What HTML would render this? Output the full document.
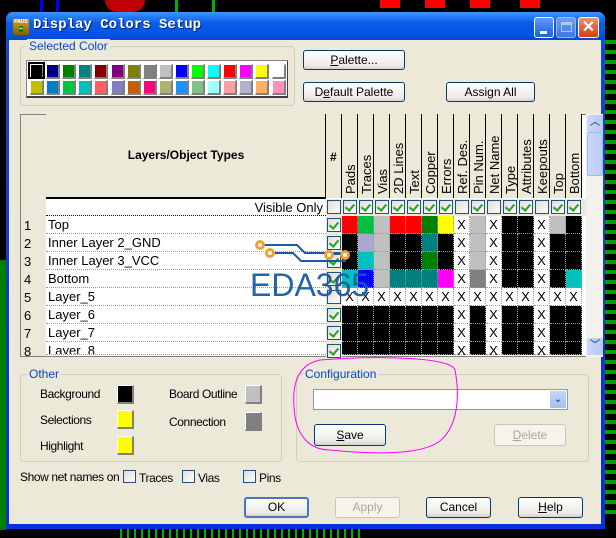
<!DOCTYPE html>
<html><head><meta charset="utf-8"><style>
*{box-sizing:border-box;margin:0;padding:0}
body{width:616px;height:538px;background:#000;position:relative;overflow:hidden;font-family:"Liberation Sans",sans-serif;font-size:12px;color:#000}
.a{position:absolute}
.btn{position:absolute;border:1px solid #003c74;border-radius:3px;background:linear-gradient(#fff,#ecebe6 80%,#d6d0c5);text-align:center;font-size:12px;line-height:18px}
.dis{border-color:#c9c7ba;color:#aca899;background:#f5f4ea}
.grp{position:absolute;border:1px solid #d0d0bf;border-radius:4px}
.gl{position:absolute;background:#ece9d8;color:#0046d5;padding:0 2px;top:-8px;left:6px;font-size:12px}
.cb{position:absolute;width:13px;height:13px;border:1px solid #1c5180;background:linear-gradient(135deg,#dcdcd7,#fff)}
.ck{position:absolute;width:14px;height:14px;border:1px solid #1c5180;background:linear-gradient(135deg,#dcdcd7,#fff)}
.ck.on::after{content:"";position:absolute;left:3px;top:1px;width:4px;height:7px;border:solid #21a121;border-width:0 2px 2px 0;transform:rotate(40deg)}
.sw{position:absolute;width:14px;height:15px;border-right:2px solid #808080;border-bottom:2px solid #808080;border-top:1px solid #fff;border-left:1px solid #fff}
.hd{position:absolute;top:114px;height:84px;border-right:1px solid #000;background:#ece9d8}
.hd span{position:absolute;left:0;bottom:4px;transform-origin:0 0;transform:rotate(-90deg) translate(0,0);white-space:nowrap;font-size:13px;width:80px}
.c{position:absolute;width:16px;height:18px;border-right:1px dotted #999;border-bottom:1px dotted #999;text-align:center;line-height:17px;font-size:13px}
.n{letter-spacing:-0.4px}
</style></head><body>
<div class="a" style="left:40px;top:0;width:3px;height:14px;background:#0000ff"></div>
<div class="a" style="left:56px;top:0;width:3px;height:14px;background:#0000ff"></div>
<div class="a" style="left:105px;top:0;width:40px;height:12px;background:#c00000;border-radius:0 0 20px 20px"></div>
<div class="a" style="left:175px;top:0;width:3px;height:14px;background:#00b000"></div>
<div class="a" style="left:212px;top:0;width:3px;height:14px;background:#00b000"></div>
<div class="a" style="left:380px;top:0;width:20px;height:8px;background:#ff0000"></div>
<div class="a" style="left:425px;top:0;width:20px;height:8px;background:#ff0000"></div>
<div class="a" style="left:470px;top:0;width:20px;height:8px;background:#ff0000"></div>
<div class="a" style="left:520px;top:0;width:20px;height:8px;background:#ff0000"></div>
<div class="a" style="left:604px;top:40px;width:12px;height:480px;background:repeating-linear-gradient(#00a000 0 4px,#000 4px 10px)"></div>
<div class="a" style="left:0;top:260px;width:6px;height:270px;background:#008000"></div>
<div class="a" style="left:120px;top:528px;width:240px;height:10px;background:repeating-linear-gradient(90deg,#00b000 0 2px,#000 2px 7px)"></div>
<div class="a" style="left:6px;top:12px;width:599px;height:517px;border-radius:7px 7px 0 0;background:linear-gradient(#0a5ee8,#0053e0 30px,#1545d0 40px,#0831d9)"></div>
<div class="a" style="left:6px;top:12px;width:599px;height:28px;border-radius:7px 7px 0 0;background:linear-gradient(#3d95ff,#0a5ce6 40%,#0055e5 80%,#0a46c8)"></div>
<div class="a" style="left:13px;top:19px;width:16px;height:16px;background:linear-gradient(#d8a020,#806000);font-size:5px;color:#fff;font-weight:bold;text-align:center;line-height:7px">PADS<br><span style="background:#080">▪▪</span></div>
<div class="a" style="left:33px;top:17px;color:#fff;font-family:'Liberation Mono',monospace;font-weight:bold;font-size:14px;text-shadow:1px 1px #0a1e80">Display Colors Setup</div>
<div class="a" style="left:534px;top:17px;width:20px;height:21px;border:1px solid #fff;border-radius:3px;background:linear-gradient(#5a9cff,#1e5ee6)"><div class="a" style="left:5px;top:13px;width:7px;height:3px;background:#fff"></div></div>
<div class="a" style="left:556px;top:17px;width:20px;height:21px;border:1px solid #ccd;border-radius:3px;background:linear-gradient(#7ab0ff,#5080e0);opacity:.8"><div class="a" style="left:4px;top:4px;width:11px;height:10px;border:1px solid #dde;border-top-width:3px"></div></div>
<div class="a" style="left:578px;top:17px;width:21px;height:21px;border:1px solid #fff;border-radius:3px;background:linear-gradient(#f09070,#d04010);color:#fff;font-weight:bold;font-size:16px;text-align:center;line-height:19px">✕</div>
<div class="a" style="left:9px;top:40px;width:592px;height:484px;background:#ece9d8"></div>

<div class="grp" style="left:20px;top:46px;width:275px;height:60px"><div class="gl">Selected Color</div></div>
<div class="a" style="left:26px;top:60px;width:262px;height:38px;background:#fff;border:1px solid #808080;border-right-color:#404040;border-bottom:2px solid #404040"></div>
<div id="pal"></div>
<div class="btn" style="left:303px;top:50px;width:102px;height:20px"><u>P</u>alette...</div>
<div class="btn" style="left:303px;top:82px;width:102px;height:20px">D<u>e</u>fault Palette</div>
<div class="btn" style="left:446px;top:82px;width:89px;height:20px">Assign All</div>

<div class="a" style="left:20px;top:114px;width:583px;height:243px;background:#fff;border:1px solid #808080"></div>
<div class="a" style="left:21px;top:115px;width:25px;height:241px;background:#ece9d8"></div>
<div class="hd" style="left:46px;width:280px;border-bottom:2px solid #000;height:85px"><div class="a" style="left:0;width:280px;top:34px;text-align:center;font-weight:bold;font-size:12px">Layers/Object Types</div></div>
<div class="hd" style="left:326px;width:16px"><div class="a" style="left:4px;top:36px;font-weight:bold">#</div></div>
<div id="hdrs"></div>
<div class="a" style="left:46px;top:199px;width:280px;height:17px;text-align:right;padding-right:3px;font-size:13px;line-height:17px;border-bottom:1px dotted #00c">Visible Only</div>
<div id="rows"></div>
<div class="a" style="left:586px;top:114px;width:17px;height:243px;background:#f3f1ec"></div>
<div class="a" style="left:587px;top:115px;width:16px;height:17px;border-radius:2px;background:linear-gradient(90deg,#c8d8ff,#b4c8f4);color:#4d6185;font-size:10px;text-align:center;line-height:16px;font-weight:bold">︿</div>
<div class="a" style="left:587px;top:132px;width:16px;height:44px;border-radius:2px;background:linear-gradient(90deg,#c8d8ff,#b8ccf8);border:1px solid #a0b8e8"></div>
<div class="a" style="left:587px;top:338px;width:16px;height:17px;border-radius:2px;background:linear-gradient(90deg,#c8d8ff,#b4c8f4);color:#4d6185;font-size:10px;text-align:center;line-height:16px;font-weight:bold">﹀</div>

<svg class="a" style="left:240px;top:236px" width="150" height="70">
<g fill="none" stroke="#1a5aa8" stroke-width="2"><path d="M24 9H57L65 17H106"/><path d="M34 17H53L61 25H106"/></g>
<g fill="#fff" stroke="#f0a030" stroke-width="3"><circle cx="20" cy="9" r="3.5"/><circle cx="30" cy="17" r="3.5"/><circle cx="89" cy="19" r="3.5"/><circle cx="105" cy="19" r="3.5"/></g>
<text x="10" y="60" font-family="Liberation Sans" font-size="32" fill="#1a5aa8" opacity=".95">EDA365</text>
</svg>

<div class="grp" style="left:20px;top:374px;width:262px;height:88px"><div class="gl">Other</div></div>
<div class="a n" style="left:40px;top:387px">Background</div>
<div class="a n" style="left:40px;top:413px">Selections</div>
<div class="a n" style="left:40px;top:439px">Highlight</div>
<div class="a n" style="left:169px;top:387px">Board Outline</div>
<div class="a n" style="left:169px;top:415px">Connection</div>
<div class="sw" style="left:117px;top:385px;width:17px;height:19px;background:#000"></div>
<div class="sw" style="left:117px;top:410px;width:17px;height:19px;background:#ff0"></div>
<div class="sw" style="left:117px;top:436px;width:17px;height:19px;background:#ff0"></div>
<div class="sw" style="left:245px;top:385px;width:17px;height:19px;background:#c0c0c0"></div>
<div class="sw" style="left:245px;top:412px;width:17px;height:19px;background:#808080"></div>
<div class="grp" style="left:296px;top:374px;width:293px;height:88px"><div class="gl">Configuration</div></div>
<div class="a" style="left:313px;top:389px;width:255px;height:21px;background:#fff;border:1px solid #7f9db9"><div class="a" style="right:1px;top:1px;width:16px;height:17px;background:linear-gradient(#c4d4fb,#a8bff0);color:#4d6185;font-size:10px;text-align:center;line-height:17px;font-weight:bold">⌄</div></div>
<div class="btn" style="left:314px;top:424px;width:72px;height:22px;line-height:20px"><u>S</u>ave</div>
<div class="btn dis" style="left:494px;top:424px;width:72px;height:22px;line-height:20px"><u>D</u>elete</div>
<svg class="a" style="left:290px;top:356px" width="170" height="105"><path d="M30 4C80 0 160 0 165 14C170 40 168 70 150 85C130 100 80 98 40 94C20 94 5 80 4 50C2 25 10 8 30 4" fill="none" stroke="#f0f" stroke-width="1"/></svg>
<div class="a n" style="left:20px;top:470px">Show net names on</div>
<div class="cb" style="left:123px;top:470px"></div><div class="a n" style="left:139px;top:471px">Traces</div>
<div class="cb" style="left:182px;top:470px"></div><div class="a n" style="left:198px;top:471px">Vias</div>
<div class="cb" style="left:243px;top:470px"></div><div class="a n" style="left:259px;top:471px">Pins</div>
<div class="btn" style="left:244px;top:497px;width:65px;height:21px;border:2px solid #4a74c8;line-height:17px">OK</div>
<div class="btn dis" style="left:335px;top:497px;width:65px;height:21px">Apply</div>
<div class="btn" style="left:426px;top:497px;width:65px;height:21px">Cancel</div>
<div class="btn" style="left:518px;top:497px;width:65px;height:21px"><u>H</u>elp</div>

<script>
const pal1=["#000","#000080","#008000","#008080","#800000","#800080","#808000","#808080","#c0c0c0","#00f","#0f0","#0ff","#f00","#f0f","#ff0","#fff"];
const pal2=["#c0c000","#0080c0","#00c040","#00c0c0","#ff6060","#8080c0","#c06000","#ff0080","#b0b070","#2090ff","#80c080","#a0ffff","#ffa0a0","#b0b0d0","#ffb060","#ff90c0"];
let h="";
pal1.forEach((c,i)=>h+=`<div class="sw" style="left:${30+i*16.1}px;top:64px;background:${c}"></div>`);
pal2.forEach((c,i)=>h+=`<div class="sw" style="left:${30+i*16.1}px;top:80px;background:${c}"></div>`);
h+=`<div class="a" style="left:28px;top:62px;width:17px;height:17px;border:2px solid #000"></div>`;
document.getElementById("pal").outerHTML=h;
const cols=["Pads","Traces","Vias","2D Lines","Text","Copper","Errors","Ref. Des.","Pin Num.","Net Name","Type","Attributes","Keepouts","Top","Bottom"];
h="";
cols.forEach((n,i)=>{h+=`<div class="hd" style="left:${342+i*16}px;width:16px"><span style="left:1px;top:80px;bottom:auto">${n}</span></div>`;});
document.getElementById("hdrs").outerHTML=h;
const vis=[1,1,1,1,1,1,1,0,1,0,1,1,0,1,1];
const C={R:"#f00",G:"#00c040",g:"#008000",L:"#c0c0c0",K:"#000",T:"#008080",Y:"#ff0",B:"#00f",c:"#00c0c0",P:"#a8a8d0",M:"#f0f",D:"#808080"};
const rows=[["Top","RGLRRgYXLXKKXLK",1],["Inner Layer 2_GND","KPLKKTKXLXKKXKK",1],["Inner Layer 3_VCC","KcLKKgKXLXKKXKK",1],["Bottom","cBLTTTMXDXKKXKc",1],["Layer_5","XXXXXXXXXXXXXXX",0],["Layer_6","KKKKKKKXKXKKXKK",1],["Layer_7","KKKKKKKXKXKKXKK",1],["Layer_8","KKKKKKKXKXKKXKK",1]];
h=`<div class="a" style="left:326px;top:199px;width:260px;height:17px;background:#ece9d8"></div><div class="ck" style="left:327px;top:200px"></div>`;
vis.forEach((v,i)=>h+=`<div class="ck ${v?'on':''}" style="left:${343+i*16}px;top:200px"></div>`);
rows.forEach((r,j)=>{const y=216+j*18;
h+=`<div class="a" style="left:24px;top:${y+2}px;font-size:13px">${j+1}</div>`;
h+=`<div class="a" style="left:46px;top:${y}px;width:280px;height:18px;border-bottom:1px dotted #999;padding-left:2px;font-size:13px;line-height:17px;overflow:hidden;${j==7?'height:13px':''}">${r[0]}</div>`;
h+=`<div class="a" style="left:326px;top:${y}px;width:16px;height:18px;background:#ece9d8"></div><div class="ck ${r[2]?'on':''}" style="left:327px;top:${y+2}px"></div>`;
[...r[1]].forEach((k,i)=>{const hh=j==7?13:18;
h+= k=="X"?`<div class="c" style="left:${342+i*16}px;top:${y}px;height:${hh}px">X</div>`:`<div class="c" style="left:${342+i*16}px;top:${y}px;height:${hh}px;background:${C[k]}"></div>`;});
});
document.getElementById("rows").outerHTML=h;
</script>
</body></html>
